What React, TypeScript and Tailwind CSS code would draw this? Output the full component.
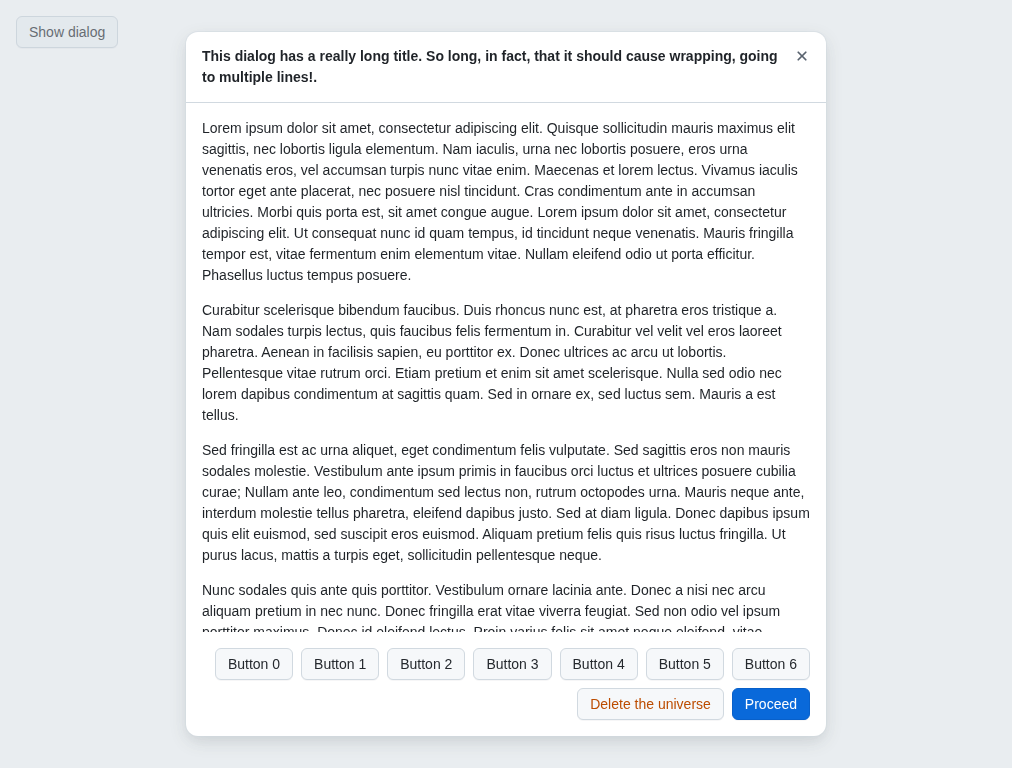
import { useState, type ButtonHTMLAttributes } from "react";

const paragraphs = [
  "Lorem ipsum dolor sit amet, consectetur adipiscing elit. Quisque sollicitudin mauris maximus elit sagittis, nec lobortis ligula elementum. Nam iaculis, urna nec lobortis posuere, eros urna venenatis eros, vel accumsan turpis nunc vitae enim. Maecenas et lorem lectus. Vivamus iaculis tortor eget ante placerat, nec posuere nisl tincidunt. Cras condimentum ante in accumsan ultricies. Morbi quis porta est, sit amet congue augue. Lorem ipsum dolor sit amet, consectetur adipiscing elit. Ut consequat nunc id quam tempus, id tincidunt neque venenatis. Mauris fringilla tempor est, vitae fermentum enim elementum vitae. Nullam eleifend odio ut porta efficitur. Phasellus luctus tempus posuere.",
  "Curabitur scelerisque bibendum faucibus. Duis rhoncus nunc est, at pharetra eros tristique a. Nam sodales turpis lectus, quis faucibus felis fermentum in. Curabitur vel velit vel eros laoreet pharetra. Aenean in facilisis sapien, eu porttitor ex. Donec ultrices ac arcu ut lobortis. Pellentesque vitae rutrum orci. Etiam pretium et enim sit amet scelerisque. Nulla sed odio nec lorem dapibus condimentum at sagittis quam. Sed in ornare ex, sed luctus sem. Mauris a est tellus.",
  "Sed fringilla est ac urna aliquet, eget condimentum felis vulputate. Sed sagittis eros non mauris sodales molestie. Vestibulum ante ipsum primis in faucibus orci luctus et ultrices posuere cubilia curae; Nullam ante leo, condimentum sed lectus non, rutrum octopodes urna. Mauris neque ante, interdum molestie tellus pharetra, eleifend dapibus justo. Sed at diam ligula. Donec dapibus ipsum quis elit euismod, sed suscipit eros euismod. Aliquam pretium felis quis risus luctus fringilla. Ut purus lacus, mattis a turpis eget, sollicitudin pellentesque neque.",
  "Nunc sodales quis ante quis porttitor. Vestibulum ornare lacinia ante. Donec a nisi nec arcu aliquam pretium in nec nunc. Donec fringilla erat vitae viverra feugiat. Sed non odio vel ipsum porttitor maximus. Donec id eleifend lectus. Proin varius felis sit amet neque eleifend, vitae.",
];

const variants = {
  normal: "border-[#d1d9e0] bg-[#f6f8fa] text-[#25292e] hover:bg-[#eff2f5]",
  danger: "border-[#d1d9e0] bg-[#f6f8fa] text-[#bc4c00] hover:bg-[#eff2f5]",
  primary: "border-[#0860ca] bg-[#0969da] text-white hover:bg-[#0860ca]",
};

type ButtonProps = ButtonHTMLAttributes<HTMLButtonElement> & {
  variant?: keyof typeof variants;
};

function Button({ variant = "normal", ...props }: ButtonProps) {
  return (
    <button
      type="button"
      className={`h-8 cursor-pointer rounded-md border px-3 text-sm whitespace-nowrap shadow-[0_1px_0_0_#1f23280a] ${variants[variant]}`}
      {...props}
    />
  );
}

function CloseIcon() {
  return (
    <svg
      aria-hidden="true"
      viewBox="0 0 16 16"
      className="size-4 fill-current stroke-current"
      strokeWidth="0.2"
    >
      <path d="M3.72 3.72a.75.75 0 0 1 1.06 0L8 6.94l3.22-3.22a.749.749 0 0 1 1.275.326.749.749 0 0 1-.215.734L9.06 8l3.22 3.22a.749.749 0 0 1-.326 1.275.749.749 0 0 1-.734-.215L8 9.06l-3.22 3.22a.751.751 0 0 1-1.042-.018.751.751 0 0 1-.018-1.042L6.94 8 3.72 4.78a.75.75 0 0 1 0-1.06Z" />
    </svg>
  );
}

function Dialog({ onClose }: { onClose: () => void }) {
  return (
    <div className="fixed inset-0 flex items-center justify-center bg-[#c8d1da66]">
      <div
        role="dialog"
        aria-modal="true"
        aria-labelledby="dialog-title"
        className="flex max-h-[calc(100vh-64px)] w-[640px] max-w-[calc(100vw-64px)] flex-col overflow-hidden rounded-xl bg-white shadow-[0_0_0_1px_#d1d9e080,0_6px_12px_-3px_#25292e0a,0_6px_18px_0_#25292e1f]"
      >
        <header className="z-10 flex shrink-0 items-start p-2 shadow-[0_1px_0_0_#d1d9e0]">
          <h1 id="dialog-title" className="grow px-2 py-1.5 text-sm/[21px] font-bold">
            This dialog has a really long title. So long, in fact, that it should cause wrapping,
            going to multiple lines!.
          </h1>
          <button
            type="button"
            aria-label="Close"
            onClick={onClose}
            className="flex size-8 shrink-0 cursor-pointer items-center justify-center rounded-md text-[#59636e] hover:bg-[#eff2f5]"
          >
            <CloseIcon />
          </button>
        </header>
        <div className="min-h-0 space-y-3.5 overflow-y-auto p-4 text-sm/[21px] [scrollbar-width:none]">
          {paragraphs.map((text) => (
            <p key={text}>{text}</p>
          ))}
        </div>
        <footer className="flex shrink-0 flex-wrap justify-end gap-2 p-4">
          {[0, 1, 2, 3, 4, 5, 6].map((n) => (
            <Button key={n}>{`Button ${n}`}</Button>
          ))}
          <Button variant="danger">Delete the universe</Button>
          <Button variant="primary" onClick={onClose}>
            Proceed
          </Button>
        </footer>
      </div>
    </div>
  );
}

export default function App() {
  const [open, setOpen] = useState(true);
  return (
    <main className="min-h-screen bg-white p-4 font-['Liberation_Sans',Arial,sans-serif] text-[#1f2328]">
      <Button onClick={() => setOpen(true)}>Show dialog</Button>
      {open && <Dialog onClose={() => setOpen(false)} />}
    </main>
  );
}
